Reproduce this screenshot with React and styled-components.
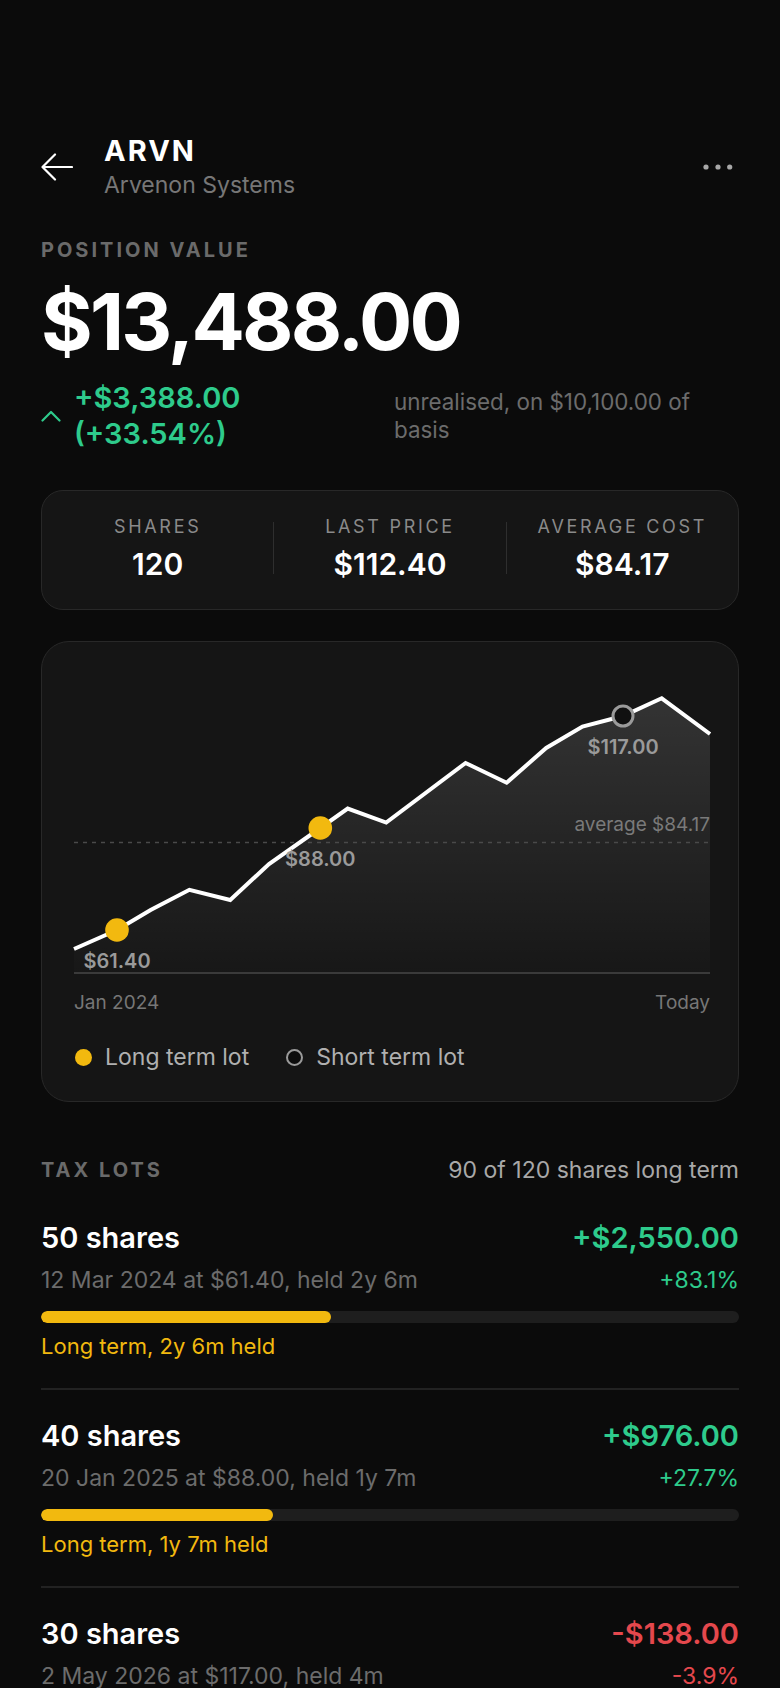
import React from 'react';
import styled, { createGlobalStyle } from 'styled-components';

const GlobalStyle = createGlobalStyle`
  body {
    margin: 0;
    background: #0b0b0b;
    font-family: Inter, "Noto Sans", sans-serif;
    color: #fff;
  }
`;

const Page = styled.div`
  padding: 134px 41px 0;
  display: flex;
  flex-direction: column;
`;

const Header = styled.header`
  display: flex;
  align-items: center;
  gap: 31px;
`;

const IconButton = styled.button`
  background: none;
  border: none;
  padding: 0;
  display: flex;
  align-items: center;
  color: ${(p) => p.$color || '#fff'};
  margin-left: ${(p) => (p.$push ? 'auto' : '0')};
  margin-right: ${(p) => (p.$push ? '6px' : '0')};
`;

const TitleBlock = styled.div`
  display: flex;
  flex-direction: column;
`;

const Ticker = styled.h1`
  margin: 0;
  font-size: 29px;
  line-height: 34px;
  font-weight: 700;
  letter-spacing: 0.07em;
`;

const Company = styled.div`
  margin-top: 2px;
  font-size: 23px;
  line-height: 30px;
  color: #777;
`;

const SectionLabel = styled.div`
  font-size: 20px;
  line-height: 24px;
  font-weight: 700;
  letter-spacing: 0.15em;
  color: #6a6a6a;
  text-transform: uppercase;
  margin-top: ${(p) => p.$top || 0}px;
`;

const BigValue = styled.div`
  margin-top: 19px;
  font-size: 79px;
  line-height: 80px;
  font-weight: 700;
  letter-spacing: -0.035em;
`;

const GainRow = styled.div`
  margin-top: 19px;
  display: grid;
  grid-template-columns: 20px 300px 1fr;
  column-gap: 13px;
  align-items: center;
`;

const Chevron = styled.svg`
  display: block;
`;

const GainText = styled.div`
  font-size: 29px;
  line-height: 36px;
  font-weight: 600;
  color: #2ecb8c;
`;

const BasisNote = styled.div`
  font-size: 22.4px;
  line-height: 28px;
  color: #6c6c6c;
  padding-left: 7px;
`;

const Card = styled.section`
  margin-top: ${(p) => p.$top}px;
  background: #151515;
  border: 1px solid #282828;
  border-radius: ${(p) => p.$radius}px;
`;

const StatsGrid = styled.div`
  display: grid;
  grid-template-columns: 1fr 1px 1fr 1px 1fr;
  align-items: center;
  padding: 24px 0 28px;
`;

const Stat = styled.div`
  display: flex;
  flex-direction: column;
  align-items: center;
  gap: 8px;
`;

const StatLabel = styled.div`
  font-size: 18px;
  line-height: 24px;
  letter-spacing: 0.15em;
  color: #8a8a8a;
`;

const StatValue = styled.div`
  font-size: 30px;
  line-height: 34px;
  font-weight: 600;
`;

const VDivider = styled.div`
  width: 1px;
  height: 52px;
  background: #2e2e2e;
`;

const ChartBody = styled.div`
  padding: 32px 28px 30px 32px;
  display: flex;
  flex-direction: column;
`;

const ChartSvg = styled.svg`
  display: block;
  overflow: visible;
`;

const AxisRow = styled.div`
  margin-top: 17px;
  display: flex;
  justify-content: space-between;
  font-size: 19px;
  line-height: 24px;
  color: #777;
`;

const Legend = styled.div`
  margin-top: 28px;
  display: flex;
  align-items: center;
  gap: 36px;
`;

const LegendItem = styled.div`
  display: flex;
  align-items: center;
  gap: 13px;
  font-size: 23px;
  line-height: 28px;
  color: #b0b0b0;
`;

const Swatch = styled.span`
  width: 17px;
  height: 17px;
  border-radius: 50%;
  box-sizing: border-box;
  margin-left: 1px;
  background: ${(p) => (p.$hollow ? '#0d0d0d' : '#f2b90f')};
  border: ${(p) => (p.$hollow ? '2px solid #9a9a9a' : 'none')};
`;

const LotsHeader = styled.div`
  margin-top: 54px;
  display: flex;
  justify-content: space-between;
  align-items: center;
  line-height: 28px;
`;

const LotsSummary = styled.div`
  font-size: 23px;
  color: #a8a8a8;
`;

const LotList = styled.div`
  margin-top: 8px;
  display: flex;
  flex-direction: column;
`;

const Lot = styled.article`
  padding: 29px 0 28px;
  border-bottom: 2px solid #222;
`;

const LotLine = styled.div`
  display: flex;
  justify-content: space-between;
  align-items: baseline;
  margin-top: ${(p) => p.$top || 0}px;
`;

const LotTitle = styled.div`
  font-size: 29px;
  line-height: 34px;
  font-weight: 600;
`;

const LotAmount = styled.div`
  font-size: 29px;
  line-height: 34px;
  font-weight: 600;
  color: ${(p) => (p.$neg ? '#e5484d' : '#2ecb8c')};
`;

const LotDetail = styled.div`
  font-size: 23px;
  line-height: 28px;
  color: ${(p) => p.$color || '#6c6c6c'};
`;

const Track = styled.div`
  margin-top: 17px;
  height: 12px;
  border-radius: 6px;
  background: #1e1e1e;
  overflow: hidden;
`;

const Fill = styled.div`
  height: 100%;
  border-radius: 6px;
  background: #f2b90f;
`;

const HeldNote = styled.div`
  margin-top: 9px;
  font-size: 22px;
  line-height: 28px;
  color: #f2b90f;
`;

const linePts = [
  [0, 275], [43, 256], [76.6, 236], [115.4, 215.8], [156.2, 226], [195, 190],
  [246.3, 154], [273.7, 134.6], [312.2, 148.6], [391.6, 89], [432.6, 108.7],
  [472.2, 74], [508.5, 52.6], [549, 42], [587.7, 24.3], [636, 60],
];

const lotMarkers = [
  { x: 43, y: 256, label: '$61.40', long: true },
  { x: 246.3, y: 154, label: '$88.00', long: true },
  { x: 549, y: 42, label: '$117.00', long: false },
];

const lots = [
  { shares: 50, amount: '+$2,550.00', detail: '12 Mar 2024 at $61.40, held 2y 6m', pct: '+83.1%', progress: 41.6, note: 'Long term, 2y 6m held' },
  { shares: 40, amount: '+$976.00', detail: '20 Jan 2025 at $88.00, held 1y 7m', pct: '+27.7%', progress: 33.3, note: 'Long term, 1y 7m held' },
  { shares: 30, amount: '-$138.00', detail: '2 May 2026 at $117.00, held 4m', pct: '-3.9%', progress: 8, note: 'Short term, 4m held', neg: true },
];

const PriceChart = () => {
  const line = linePts.map(([x, y], i) => `${i ? 'L' : 'M'}${x} ${y}`).join(' ');
  const area = `${line} L636 299 L0 299 Z`;
  return (
    <ChartSvg width="636" height="300" viewBox="0 0 636 300">
      <defs>
        <linearGradient id="areaFade" x1="0" y1="0" x2="0" y2="1">
          <stop offset="0" stopColor="#ffffff" stopOpacity="0.13" />
          <stop offset="1" stopColor="#ffffff" stopOpacity="0.01" />
        </linearGradient>
      </defs>
      <path d={area} fill="url(#areaFade)" />
      <line x1="0" y1="168.5" x2="636" y2="168.5" stroke="#4a4a4a" strokeWidth="1.5" strokeDasharray="4 5" />
      <text x="636" y="157" textAnchor="end" fontSize="19" fill="#7a7a7a" fontFamily="Inter, sans-serif">
        average $84.17
      </text>
      <line x1="0" y1="299" x2="636" y2="299" stroke="#3a3a3a" strokeWidth="2" />
      <path d={line} fill="none" stroke="#fff" strokeWidth="4" strokeLinejoin="miter" />
      {lotMarkers.map((m) => (
        <g key={m.label}>
          {m.long ? (
            <circle cx={m.x} cy={m.y} r="11.8" fill="#f2b90f" />
          ) : (
            <circle cx={m.x} cy={m.y} r="10" fill="#101010" stroke="#9a9a9a" strokeWidth="3" />
          )}
          <text x={m.x} y={m.y + 38} textAnchor="middle" fontSize="20" fontWeight="600" fill="#9a9a9a" fontFamily="Inter, sans-serif">
            {m.label}
          </text>
        </g>
      ))}
    </ChartSvg>
  );
};

export default function App() {
  return (
    <>
      <GlobalStyle />
      <Page>
        <Header>
          <IconButton aria-label="Back">
            <svg width="32" height="28" viewBox="0 0 32 28" fill="none" stroke="currentColor" strokeWidth="2.2" strokeLinecap="round" strokeLinejoin="round">
              <path d="M31 14H2M14 1.5 1.5 14 14 26.5" />
            </svg>
          </IconButton>
          <TitleBlock>
            <Ticker>ARVN</Ticker>
            <Company>Arvenon Systems</Company>
          </TitleBlock>
          <IconButton $push $color="#a8a8a8" aria-label="More">
            <svg width="30" height="6" viewBox="0 0 30 6" fill="currentColor">
              <circle cx="3" cy="3" r="2.6" />
              <circle cx="15" cy="3" r="2.6" />
              <circle cx="26.7" cy="3" r="2.6" />
            </svg>
          </IconButton>
        </Header>

        <SectionLabel $top={38}>Position value</SectionLabel>
        <BigValue>$13,488.00</BigValue>
        <GainRow>
          <Chevron width="20" height="12" viewBox="0 0 20 12" fill="none" stroke="#2ecb8c" strokeWidth="2.2" strokeLinecap="round" strokeLinejoin="round">
            <path d="M1.5 10.5 10 2l8.5 8.5" />
          </Chevron>
          <GainText>+$3,388.00 (+33.54%)</GainText>
          <BasisNote>unrealised, on $10,100.00 of basis</BasisNote>
        </GainRow>

        <Card $top={38} $radius={22}>
          <StatsGrid>
            <Stat>
              <StatLabel>SHARES</StatLabel>
              <StatValue>120</StatValue>
            </Stat>
            <VDivider />
            <Stat>
              <StatLabel>LAST PRICE</StatLabel>
              <StatValue>$112.40</StatValue>
            </Stat>
            <VDivider />
            <Stat>
              <StatLabel>AVERAGE COST</StatLabel>
              <StatValue>$84.17</StatValue>
            </Stat>
          </StatsGrid>
        </Card>

        <Card $top={31} $radius={28}>
          <ChartBody>
            <PriceChart />
            <AxisRow>
              <span>Jan 2024</span>
              <span>Today</span>
            </AxisRow>
            <Legend>
              <LegendItem>
                <Swatch />
                Long term lot
              </LegendItem>
              <LegendItem>
                <Swatch $hollow />
                Short term lot
              </LegendItem>
            </Legend>
          </ChartBody>
        </Card>

        <LotsHeader>
          <SectionLabel>Tax lots</SectionLabel>
          <LotsSummary>90 of 120 shares long term</LotsSummary>
        </LotsHeader>

        <LotList>
          {lots.map((lot) => (
            <Lot key={lot.shares}>
              <LotLine>
                <LotTitle>{lot.shares} shares</LotTitle>
                <LotAmount $neg={lot.neg}>{lot.amount}</LotAmount>
              </LotLine>
              <LotLine $top={11}>
                <LotDetail>{lot.detail}</LotDetail>
                <LotDetail $color={lot.neg ? '#e5484d' : '#2ecb8c'}>{lot.pct}</LotDetail>
              </LotLine>
              <Track>
                <Fill style={{ width: `${lot.progress}%` }} />
              </Track>
              <HeldNote>{lot.note}</HeldNote>
            </Lot>
          ))}
        </LotList>
      </Page>
    </>
  );
}
